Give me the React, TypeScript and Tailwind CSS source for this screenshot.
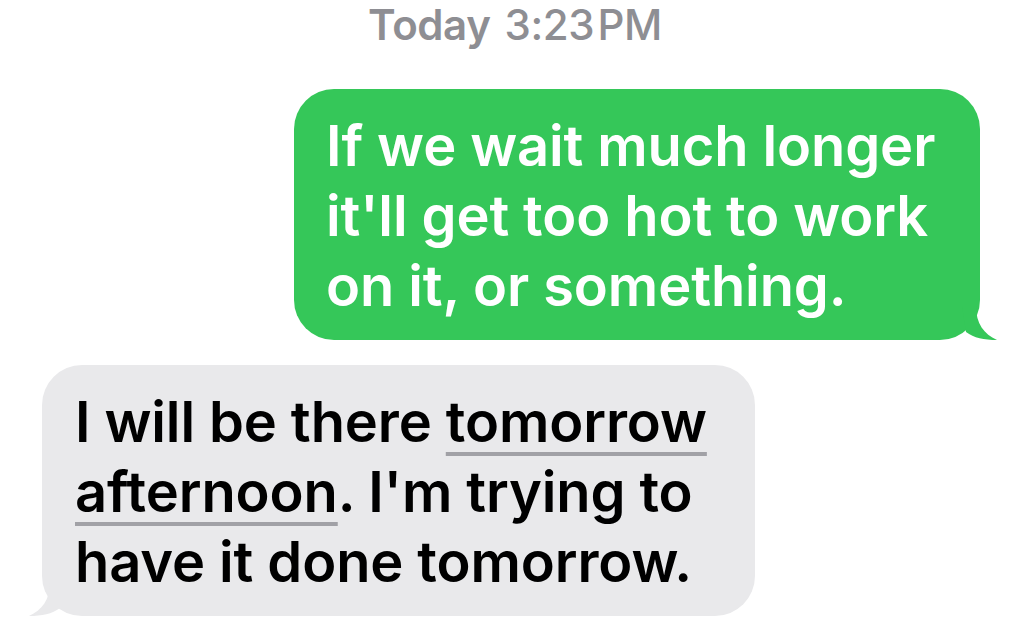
import React from 'react';

const font = { fontFamily: 'Inter, "Noto Sans", sans-serif' };

function SentTail() {
  return (
    <svg className="absolute right-[-18px] bottom-0" width="36" height="34" viewBox="0 0 36 34">
      <path d="M0 0 H14 C14 18 22 28 35 34 C22 34 12 32 4 26 Z" fill="#35c759" />
    </svg>
  );
}

function ReceivedTail() {
  return (
    <svg className="absolute left-[-14px] bottom-0" width="36" height="34" viewBox="0 0 36 34">
      <path d="M36 0 H22 C22 18 14 28 1 34 C14 34 24 32 32 26 Z" fill="#e9e9eb" />
    </svg>
  );
}

export default function App() {
  return (
    <div className="w-[1024px] h-[630px] bg-white overflow-hidden" style={font}>
      {/* timestamp */}
      <div className="flex justify-center pl-[6px] text-[42px] leading-[50px] text-[#8e8e93] tracking-[-0.4px]">
        <span className="font-semibold">Today</span>
        <span className="ml-[14px] font-medium">3:23&#8202;PM</span>
      </div>

      {/* sent */}
      <div className="flex justify-end pr-[44px] mt-[39px]">
        <div className="relative bg-[#35c759] rounded-[40px] w-[686px] pl-[32px] pr-[12px] pt-[22px] pb-[19px]">
          <p className="text-white text-[56px] leading-[70px] font-semibold tracking-[-0.1px]">
            If we wait much longer it'll get too hot to work on it, or something.
          </p>
          <SentTail />
        </div>
      </div>

      {/* received */}
      <div className="flex justify-start pl-[42px] mt-[25px]">
        <div className="relative bg-[#e9e9eb] rounded-[40px] w-[713px] pl-[33px] pr-[10px] pt-[22px] pb-[19px]">
          <p className="text-black text-[56px] leading-[70px] font-semibold tracking-[-0.1px]">
            I will be there{' '}
            <span className="underline decoration-[#a1a1a6] decoration-[4px] underline-offset-[10px]">
              tomorrow afternoon
            </span>
            . I'm trying to have it done tomorrow.
          </p>
          <ReceivedTail />
        </div>
      </div>
    </div>
  );
}
